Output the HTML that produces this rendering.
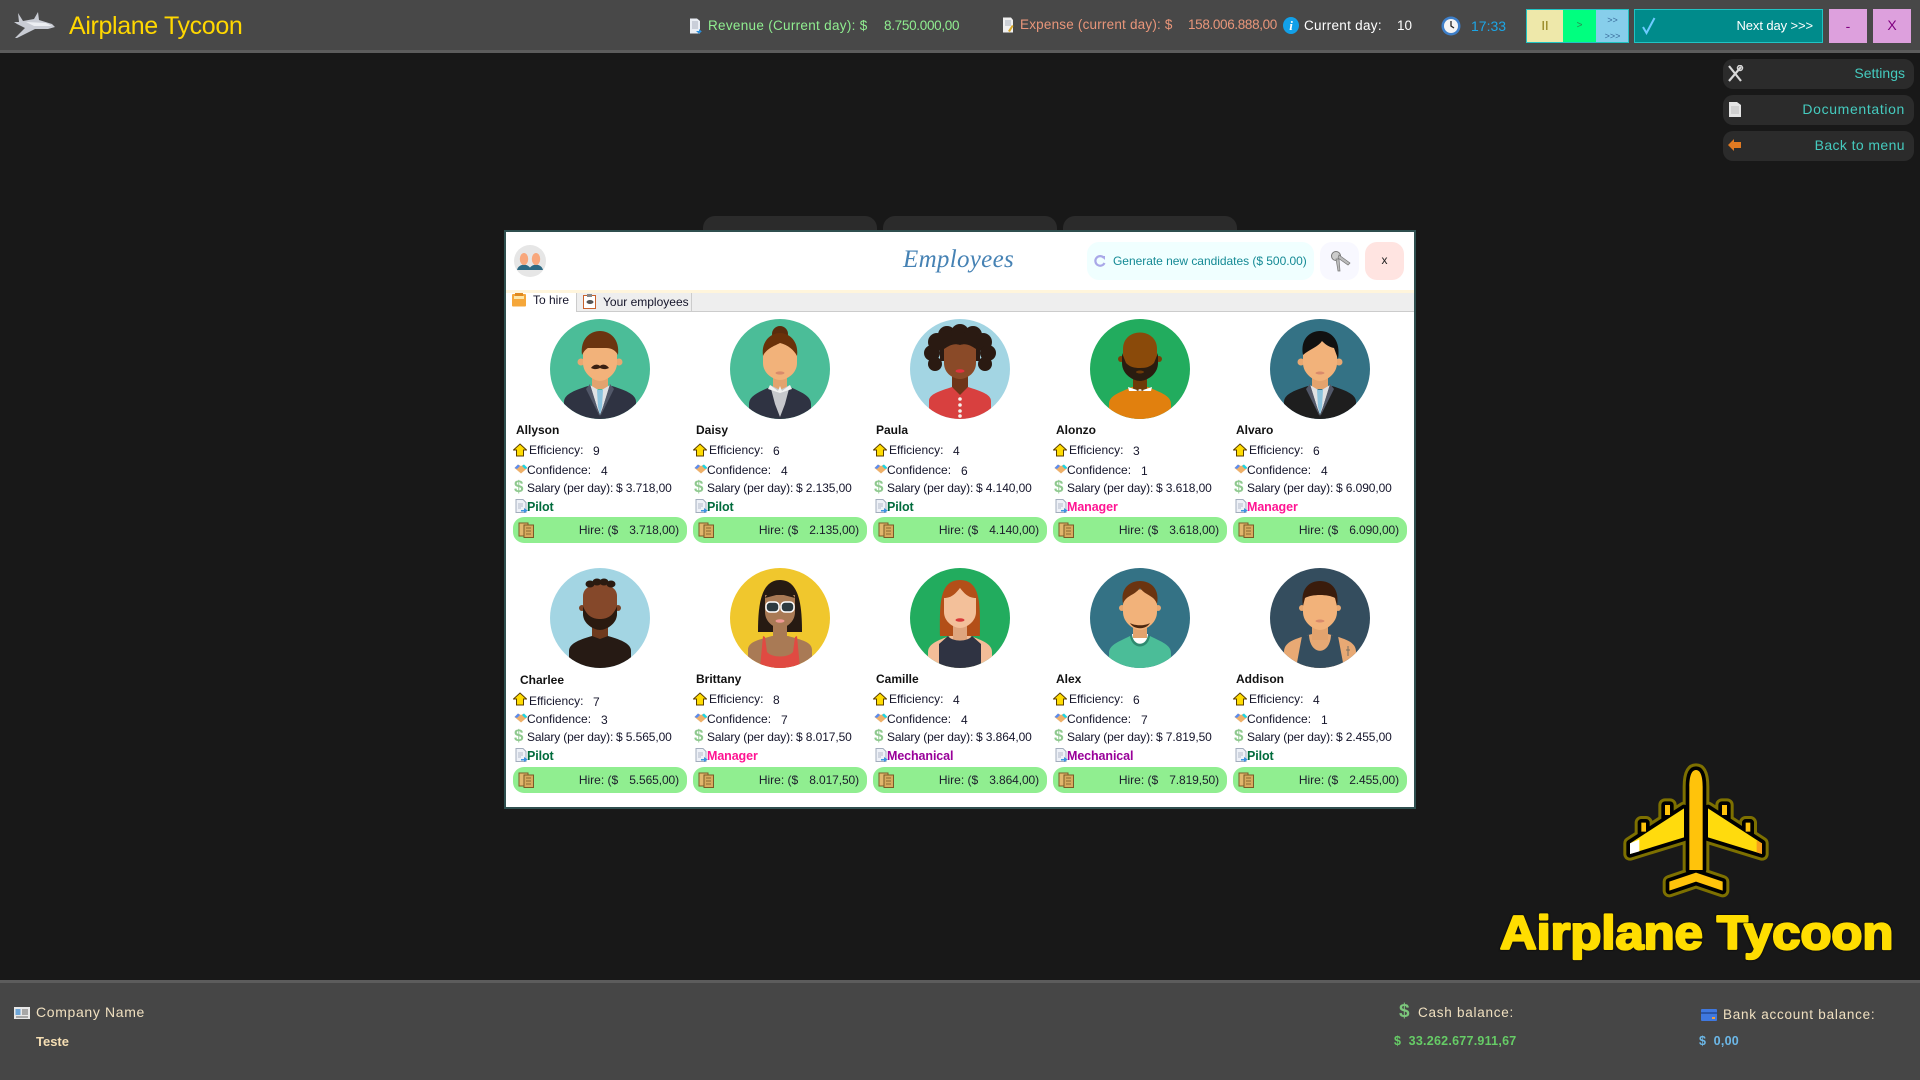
<!DOCTYPE html>
<html><head><meta charset="utf-8"><title>Airplane Tycoon</title>
<style>
html,body{margin:0;padding:0;width:1920px;height:1080px;overflow:hidden;background:#181818;font-family:"Liberation Sans",sans-serif;}
.a{position:absolute;white-space:nowrap;}
#top{position:absolute;left:0;top:0;width:1920px;height:50px;background:#484848;border-bottom:3px solid #5c5c5c;}
#bot{position:absolute;left:0;top:980px;width:1920px;height:97px;background:#464646;border-top:3px solid #5c5c5c;}
.t{font-size:13.5px;line-height:16px;top:18px;}
.sb{position:absolute;left:1723px;width:191px;height:30px;background:#2b2b2b;border-radius:10px;color:#45cbbf;font-size:14px;line-height:28px;text-align:right;box-sizing:border-box;padding-right:9px;letter-spacing:.4px;}
.tb{position:absolute;top:216px;width:174px;height:20px;background:#2b2b2b;border-radius:12px 12px 0 0;}
#m{position:absolute;left:504px;top:230px;width:908px;height:575px;background:#fff;border:2px solid #2f4f4f;}
.c{position:absolute;width:174px;height:130px;font-size:12px;line-height:16px;color:#14142a;}
.c .n{position:absolute;left:3px;top:2px;font-weight:bold;color:#111;white-space:nowrap;}
.c .l{position:absolute;white-space:nowrap;}
.c svg.i{position:absolute;}
.e{left:16px;top:22px}.ev{left:80px;top:23px}
.f{left:14px;top:42px}.fv{left:88px;top:43px}
.s{left:14px;top:60px;letter-spacing:-.15px}.sv{left:103px;top:60px;letter-spacing:-.1px}
.r{left:14px;top:79px;font-weight:bold;font-size:12.5px;letter-spacing:-.1px}
.pi{color:#006b3c}.ma{color:#ff1493}.me{color:#990099}
.d{position:absolute;left:1px;font-size:17px;font-weight:bold;color:#8fc98f;top:59px;}
.h{position:absolute;left:0;width:174px;height:26px;background:#90ee90;border-radius:11px;text-align:right;box-sizing:border-box;padding-right:8px;line-height:26px;font-size:12px;color:#1c1c2c;}
.h b{font-weight:normal;margin-left:11px;letter-spacing:-.1px;}
.av{position:absolute;left:37px;top:-101px;width:100px;height:100px;border-radius:50%;display:block;}
</style></head><body>
<svg width="0" height="0" style="position:absolute"><defs>
<symbol id="ue" viewBox="0 0 14 14"><path d="M7 1L13.500 7H10.500V13H3.500V7H.5Z" fill="#ffdc00" stroke="#5b3f00" stroke-width="1"/></symbol>
<symbol id="uc" viewBox="0 0 14 10"><path d="M7 9.500L.5 4 4 .5 7 2 10 .5 13.500 4Z" fill="#eeb069"/><path d="M.5 4L4 .5 6 2 3 5Z" fill="#5a8cf0"/><path d="M13.500 4L10 .5 8 2 11 5Z" fill="#1cd6e8"/></symbol>
<symbol id="ud" viewBox="0 0 13 14"><path d="M1 .5H8L11 3.500V13.500H1Z" fill="#eef1f7" stroke="#a3adbd"/><path d="M3 5H8M3 7H8M3 9H6" stroke="#b4bccb"/><path d="M6 11H9V9L12.800 11.500 9 14V12.500H6Z" fill="#3d93e0"/></symbol>
<symbol id="uh" viewBox="0 0 16 16"><rect x="1" y="1" width="9" height="13" fill="#e2b76e" stroke="#7c5a26"/><rect x="6" y="3" width="9.500" height="12.500" fill="#d8aa5e" stroke="#7c5a26"/><path d="M8 6H13M8 9H13M8 12H13" stroke="#8c6a30"/></symbol>
</defs></svg>

<div id="top"></div>
<svg class="a" style="left:12px;top:11px" width="44" height="28" viewBox="0 0 44 28"><path d="M6 2L11 10 22 8 26 1 27 9 40 13 43 16 36 18 23 18 5 27 3 27 13 17 5 13 2 11 7 11Z" fill="#c9ccd4"/><path d="M14 11L34 12 40 15 22 15Z" fill="#eceef2"/></svg>
<div class="a" style="left:69px;top:12px;font-size:25px;line-height:28px;color:#ffd700;letter-spacing:-.36px">Airplane Tycoon</div>

<svg class="a" style="left:689px;top:18px" width="13" height="16" viewBox="0 0 13 16"><path d="M1 .5H8L11 3V15.500H1Z" fill="#e9edf3"/><path d="M3 4H9M3 6H9M3 8H9M3 10H9" stroke="#a9b0bc"/><path d="M7 13H10V11L12.800 13.500 10 15.800Z" fill="#2a8fdc"/></svg>
<div class="a t" style="left:708px;color:#90ee90;letter-spacing:.3px">Revenue (Current day): $</div>
<div class="a t" style="left:884px;color:#90ee90;letter-spacing:-.3px">8.750.000,00</div>
<svg class="a" style="left:1002px;top:17px" width="13" height="16" viewBox="0 0 13 16"><path d="M1 .5H9L11 3V15.500H1Z" fill="#f0f0f0"/><path d="M3 4H9M3 6H9M3 8H9" stroke="#a9b0bc"/><path d="M6 14L10 8 11.500 9 8 15Z" fill="#d9a520"/></svg>
<div class="a t" style="left:1020px;color:#e9967a;letter-spacing:.2px;top:17px">Expense (current day): $</div>
<div class="a t" style="left:1188px;color:#e9967a;top:17px;letter-spacing:-.35px">158.006.888,00</div>
<div class="a" style="left:1283px;top:17px;width:16px;height:17px;border-radius:50%;background:#12a0e8;color:#fff;font:italic bold 13px/17px 'Liberation Serif',serif;text-align:center">i</div>
<div class="a t" style="left:1304px;color:#fff;letter-spacing:.3px">Current day:</div>
<div class="a t" style="left:1397px;color:#fff">10</div>
<svg class="a" style="left:1441px;top:16px" width="20" height="20" viewBox="0 0 20 20"><circle cx="10" cy="10" r="9.500" fill="#3e7fc9"/><circle cx="10" cy="10" r="7" fill="#f4f4f4"/><path d="M10 5V10L13 12" stroke="#222" stroke-width="1.300" fill="none"/></svg>
<div class="a t" style="left:1471px;color:#1ca6e6;font-size:14px">17:33</div>

<div class="a" style="left:1526px;top:9px;width:103px;height:34px;box-sizing:border-box;border:1px solid #20c4c4;background:#87ceeb"></div>
<div class="a" style="left:1527px;top:10px;width:36px;height:32px;background:#eee8aa;color:#8a7a10;font-size:13px;line-height:32px;text-align:center">II</div>
<div class="a" style="left:1563px;top:10px;width:33px;height:32px;background:#00ff7f;color:#2a8a50;font-size:10px;line-height:32px;text-align:center">&gt;</div>
<div class="a" style="left:1596px;top:12px;width:33px;color:#3a6a9a;font-size:9px;line-height:16px;text-align:center">&gt;&gt;<br>&gt;&gt;&gt;</div>
<div class="a" style="left:1634px;top:9px;width:189px;height:34px;box-sizing:border-box;border:1px solid #20c4c4;background:#008b8b;color:#fff;font-size:13px;line-height:31px;text-align:right;padding-right:9px;letter-spacing:-.1px">Next day &gt;&gt;&gt;</div>
<svg class="a" style="left:1642px;top:17px" width="14" height="18" viewBox="0 0 14 18"><path d="M1 10L4.500 16 12.500 1" stroke="#6ecbff" stroke-width="2" fill="none"/></svg>
<div class="a" style="left:1829px;top:9px;width:38px;height:34px;background:#dda0dd;color:#800080;font-size:14px;line-height:34px;text-align:center">-</div>
<div class="a" style="left:1873px;top:9px;width:38px;height:34px;background:#dda0dd;color:#800080;font-size:14px;line-height:32px;text-align:center">X</div>

<div class="sb" style="top:59px;letter-spacing:0">Settings</div>
<div class="sb" style="top:95px;letter-spacing:.65px">Documentation</div>
<div class="sb" style="top:131px">Back to menu</div>
<svg class="a" style="left:1726px;top:65px" width="18" height="18" viewBox="0 0 18 18"><path d="M3 1L15 16M15 2L3 16" stroke="#d8d8d8" stroke-width="2.200"/><circle cx="14" cy="3" r="2.500" fill="none" stroke="#d8d8d8" stroke-width="1.500"/></svg>
<svg class="a" style="left:1729px;top:102px" width="12" height="15" viewBox="0 0 12 15"><path d="M0 0H8L12 3V15H0Z" fill="#e4e4e4"/><path d="M2 5H10M2 7H10M2 9H10M2 11H10" stroke="#bbb"/></svg>
<svg class="a" style="left:1728px;top:139px" width="13" height="12" viewBox="0 0 13 12"><path d="M0 6L6 0V3H13V9H6V12Z" fill="#e07a22"/></svg>

<div class="tb" style="left:703px"></div>
<div class="tb" style="left:883px"></div>
<div class="tb" style="left:1063px"></div>

<div id="m"></div>
<div class="a" style="left:514px;top:245px;width:32px;height:32px;border-radius:50%;background:#e6e6e6"></div>
<svg class="a" style="left:516px;top:252px" width="28" height="20" viewBox="0 0 28 20"><path d="M1 18C2 14 5 13 8 12.500 11 13 14 14 15 18ZM13 18C14 14 17 13 20 12.500 23 13 26 14 27 18Z" fill="#2e6a84"/><ellipse cx="8" cy="7" rx="4.200" ry="6" fill="#f8a77c"/><ellipse cx="20" cy="7" rx="4.200" ry="6" fill="#f8a77c"/></svg>
<div class="a" style="left:903px;top:244px;font:italic 25px/32px 'Liberation Serif',serif;color:#4682b4;letter-spacing:.3px">Employees</div>
<div class="a" style="left:1087px;top:242px;width:227px;height:38px;border-radius:12px;background:#f0ffff"></div>
<svg class="a" style="left:1094px;top:255px" width="12" height="12" viewBox="0 0 12 12"><path d="M10 3A4.800 4.800 0 1 0 10.500 8" fill="none" stroke="#a9a8e8" stroke-width="2.200"/><path d="M7 1H11V5Z" fill="#a9a8e8"/></svg>
<div class="a" style="left:1113px;top:253px;font-size:12px;line-height:16px;color:#158a95;letter-spacing:-.03px">Generate new candidates ($ 500.00)</div>
<div class="a" style="left:1320px;top:242px;width:39px;height:38px;border-radius:12px;background:#f8f8ff"></div>
<svg class="a" style="left:1328px;top:250px" width="24" height="22" viewBox="0 0 24 22"><circle cx="8" cy="6" r="4.500" fill="#ccc" stroke="#777"/><path d="M8 9L10 21H12L11 9ZM11 5L22 13 20 15 10 8Z" fill="#bbb" stroke="#777" stroke-width=".7"/></svg>
<div class="a" style="left:1365px;top:242px;width:39px;height:38px;border-radius:12px;background:#ffe4e1;color:#222;font-size:12px;line-height:36px;text-align:center">x</div>

<div class="a" style="left:506px;top:290px;width:908px;height:3px;background:#fff5dc"></div>
<div class="a" style="left:506px;top:293px;width:908px;height:18px;background:#eeeeee;border-bottom:1px solid #ccc"></div>
<div class="a" style="left:506px;top:293px;width:70px;height:19px;background:#fff;border-right:1px solid #ccc"></div>
<div class="a" style="left:577px;top:293px;width:114px;height:18px;border-right:1px solid #ccc"></div>
<svg class="a" style="left:512px;top:293px" width="15" height="14" viewBox="0 0 15 14"><rect x="0" y="1" width="14" height="12.500" rx="1" fill="#f5a73a"/><rect x="3" y="0" width="8" height="3" fill="#e08a20"/><rect x="2" y="3" width="10" height="3" fill="#fde6a8"/></svg>
<div class="a" style="left:533px;top:292px;font-size:12px;line-height:16px;color:#14142a">To hire</div>
<svg class="a" style="left:583px;top:294px" width="13" height="15" viewBox="0 0 13 15"><rect x=".5" y="1.500" width="12" height="13" fill="#fff" stroke="#c8622c"/><rect x="4" y="0" width="5" height="3" fill="#888"/><ellipse cx="7" cy="8" rx="3.500" ry="2" fill="#555"/></svg>
<div class="a" style="left:603px;top:294px;font-size:12px;line-height:16px;color:#14142a">Your employees</div>

<!-- Row 1 -->
<div class="c" style="left:513px;top:420px">
<svg class="av" viewBox="0 0 100 100"><rect width="100" height="100" fill="#4bbd98"/><path d="M14 100V83C14 76 22 72 38 67L50 72 62 67C78 72 86 76 86 83V100Z" fill="#2f3342"/><rect x="42" y="52" width="16" height="18" fill="#e2a36e"/><path d="M40 66L50 72 60 66 53 88 50 96 47 88Z" fill="#dfe1e4"/><path d="M47 71H53L52 88 50 96 48 88Z" fill="#8cc3de"/><path d="M40 65L36 70 50 98ZM60 65L64 70 50 98Z" fill="#525869"/><circle cx="31" cy="43" r="3.500" fill="#e8a872"/><circle cx="69" cy="43" r="3.500" fill="#e8a872"/><path d="M33 36C33 14 67 14 67 36V44C67 55 56 62 50 62 44 62 33 55 33 44Z" fill="#f2b27a"/><path d="M32 36C30 20 40 12 50 12 60 12 70 20 68 36 66 32 62 29 56 29H38C36 30 34 32 32 36Z" fill="#6b3410"/><path d="M41 49C44 45 48 45 50 47 52 45 56 45 59 49 55 51 52 50 50 49 48 50 45 51 41 49Z" fill="#3a2012"/></svg>
<div class="n">Allyson</div>
<svg class="i" style="left:0;top:23px" width="14" height="14"><use href="#ue"/></svg><div class="l e">Efficiency:</div><div class="l ev">9</div>
<svg class="i" style="left:1px;top:44px" width="14" height="10"><use href="#uc"/></svg><div class="l f">Confidence:</div><div class="l fv">4</div>
<div class="d">$</div><div class="l s">Salary (per day):</div><div class="l sv">$ 3.718,00</div>
<svg class="i" style="left:2px;top:79px" width="13" height="14"><use href="#ud"/></svg><div class="l r pi">Pilot</div>
<div class="h" style="top:97px"><svg class="i" style="left:5px;top:5px" width="16" height="16"><use href="#uh"/></svg>Hire: ($<b>3.718,00)</b></div>
</div>

<div class="c" style="left:693px;top:420px">
<svg class="av" viewBox="0 0 100 100"><rect width="100" height="100" fill="#4bbd98"/><path d="M19 100V85C19 78 26 74 40 68L50 72 60 68C74 74 81 78 81 85V100Z" fill="#2f3342"/><rect x="43" y="52" width="14" height="18" fill="#e2a36e"/><path d="M40 66L50 71 60 66 55 85 50 98 45 85Z" fill="#c6c8cc"/><path d="M40 66L48 72 50 67 52 72 60 66 62 70 50 74 38 70Z" fill="#f2f2f2"/><circle cx="50" cy="15" r="8" fill="#5a2c0c"/><path d="M33 38C33 16 67 16 67 38V44C67 55 56 61 50 61 44 61 33 55 33 44Z" fill="#f2b27a"/><path d="M33 37C31 22 41 14 50 14 59 14 69 22 67 37 64 31 58 26 50 24 44 27 36 30 33 37Z" fill="#6a3109"/><ellipse cx="50" cy="54" rx="4.500" ry="1.600" fill="#d98a6b"/></svg>
<div class="n">Daisy</div>
<svg class="i" style="left:0;top:23px" width="14" height="14"><use href="#ue"/></svg><div class="l e">Efficiency:</div><div class="l ev">6</div>
<svg class="i" style="left:1px;top:44px" width="14" height="10"><use href="#uc"/></svg><div class="l f">Confidence:</div><div class="l fv">4</div>
<div class="d">$</div><div class="l s">Salary (per day):</div><div class="l sv">$ 2.135,00</div>
<svg class="i" style="left:2px;top:79px" width="13" height="14"><use href="#ud"/></svg><div class="l r pi">Pilot</div>
<div class="h" style="top:97px"><svg class="i" style="left:5px;top:5px" width="16" height="16"><use href="#uh"/></svg>Hire: ($<b>2.135,00)</b></div>
</div>

<div class="c" style="left:873px;top:420px">
<svg class="av" viewBox="0 0 100 100"><rect width="100" height="100" fill="#a3d5e3"/><g fill="#2a1a12"><circle cx="22" cy="34" r="8"/><circle cx="27" cy="23" r="9"/><circle cx="37" cy="16" r="9"/><circle cx="50" cy="14" r="9"/><circle cx="63" cy="16" r="9"/><circle cx="73" cy="23" r="9"/><circle cx="78" cy="34" r="8"/><circle cx="25" cy="45" r="7"/><circle cx="75" cy="45" r="7"/><rect x="30" y="18" width="40" height="24"/></g><path d="M19 100V82C19 75 30 72 42 68L50 74 58 68C70 72 81 75 81 82V100Z" fill="#d8403f"/><path d="M42 52H58V68L50 76 42 68Z" fill="#6e3519"/><path d="M34 30C40 26 44 24 50 26 56 24 60 26 66 30V44C66 55 56 60 50 60 44 60 34 55 34 44Z" fill="#8a4a28"/><ellipse cx="50" cy="52" rx="4.500" ry="1.800" fill="#e0333f"/><g fill="#f4f0ec"><circle cx="50" cy="80" r="1.800"/><circle cx="50" cy="86" r="1.800"/><circle cx="50" cy="92" r="1.800"/><circle cx="50" cy="97" r="1.800"/></g></svg>
<div class="n">Paula</div>
<svg class="i" style="left:0;top:23px" width="14" height="14"><use href="#ue"/></svg><div class="l e">Efficiency:</div><div class="l ev">4</div>
<svg class="i" style="left:1px;top:44px" width="14" height="10"><use href="#uc"/></svg><div class="l f">Confidence:</div><div class="l fv">6</div>
<div class="d">$</div><div class="l s">Salary (per day):</div><div class="l sv">$ 4.140,00</div>
<svg class="i" style="left:2px;top:79px" width="13" height="14"><use href="#ud"/></svg><div class="l r pi">Pilot</div>
<div class="h" style="top:97px"><svg class="i" style="left:5px;top:5px" width="16" height="16"><use href="#uh"/></svg>Hire: ($<b>4.140,00)</b></div>
</div>

<div class="c" style="left:1053px;top:420px">
<svg class="av" viewBox="0 0 100 100"><rect width="100" height="100" fill="#22ac5e"/><path d="M19 100V85C19 77 28 74 42 68H58C72 74 81 77 81 85V100Z" fill="#e1800e"/><rect x="43" y="52" width="14" height="20" fill="#6e3a08"/><path d="M38 68L50 72 62 68 61 72 54 72 50 70 46 72 39 72Z" fill="#fff"/><circle cx="31" cy="40" r="3" fill="#7a4008"/><circle cx="69" cy="40" r="3" fill="#7a4008"/><path d="M33 30C33 8 67 8 67 30V42C67 55 56 62 50 62 44 62 33 55 33 42Z" fill="#8a4a0a"/><path d="M32 34L36 44C40 48 44 49 50 49 56 49 60 48 64 44L68 34V44C68 56 56 62 50 62 44 62 32 56 32 44Z" fill="#2a1c10"/><ellipse cx="50" cy="53" rx="4" ry="1.500" fill="#6e3a08"/></svg>
<div class="n">Alonzo</div>
<svg class="i" style="left:0;top:23px" width="14" height="14"><use href="#ue"/></svg><div class="l e">Efficiency:</div><div class="l ev">3</div>
<svg class="i" style="left:1px;top:44px" width="14" height="10"><use href="#uc"/></svg><div class="l f">Confidence:</div><div class="l fv">1</div>
<div class="d">$</div><div class="l s">Salary (per day):</div><div class="l sv">$ 3.618,00</div>
<svg class="i" style="left:2px;top:79px" width="13" height="14"><use href="#ud"/></svg><div class="l r ma">Manager</div>
<div class="h" style="top:97px"><svg class="i" style="left:5px;top:5px" width="16" height="16"><use href="#uh"/></svg>Hire: ($<b>3.618,00)</b></div>
</div>

<div class="c" style="left:1233px;top:420px">
<svg class="av" viewBox="0 0 100 100"><rect width="100" height="100" fill="#347285"/><path d="M14 100V83C14 76 22 72 38 67L50 72 62 67C78 72 86 76 86 83V100Z" fill="#1e1e1e"/><rect x="42" y="52" width="16" height="18" fill="#e2a36e"/><path d="M40 66L50 72 60 66 53 88 50 96 47 88Z" fill="#dfe1e4"/><path d="M47 71H53L52 88 50 96 48 88Z" fill="#8cc3de"/><path d="M40 65L36 70 50 98ZM60 65L64 70 50 98Z" fill="#525869"/><circle cx="31" cy="43" r="3.500" fill="#e8a872"/><circle cx="69" cy="43" r="3.500" fill="#e8a872"/><path d="M33 36C33 14 67 14 67 36V44C67 55 56 62 50 62 44 62 33 55 33 44Z" fill="#f2b27a"/><path d="M33 36C30 20 40 12 50 12 62 12 71 22 68 40L64 29C58 28 54 24 52 22 48 28 40 30 33 36Z" fill="#111"/><ellipse cx="50" cy="54" rx="4.500" ry="1.500" fill="#d98a6b"/></svg>
<div class="n">Alvaro</div>
<svg class="i" style="left:0;top:23px" width="14" height="14"><use href="#ue"/></svg><div class="l e">Efficiency:</div><div class="l ev">6</div>
<svg class="i" style="left:1px;top:44px" width="14" height="10"><use href="#uc"/></svg><div class="l f">Confidence:</div><div class="l fv">4</div>
<div class="d">$</div><div class="l s">Salary (per day):</div><div class="l sv">$ 6.090,00</div>
<svg class="i" style="left:2px;top:79px" width="13" height="14"><use href="#ud"/></svg><div class="l r ma">Manager</div>
<div class="h" style="top:97px"><svg class="i" style="left:5px;top:5px" width="16" height="16"><use href="#uh"/></svg>Hire: ($<b>6.090,00)</b></div>
</div>

<!-- Row 2 -->
<div class="c" style="left:513px;top:669px">
<svg class="av" viewBox="0 0 100 100"><rect width="100" height="100" fill="#a3d5e3"/><path d="M19 100V83C19 76 28 72 42 68H58C72 72 81 76 81 83V100Z" fill="#261a14"/><path d="M42 52H58V68L50 71 42 68Z" fill="#6e3a1e"/><circle cx="32" cy="40" r="3" fill="#7a4326"/><circle cx="68" cy="40" r="3" fill="#7a4326"/><path d="M33 28C33 12 67 12 67 28V44C67 55 56 62 50 62 44 62 33 55 33 44Z" fill="#85482a"/><path d="M33 38C37 49 44 51 50 51 56 51 63 49 67 38V46C67 56 56 62 50 62 44 62 33 56 33 46Z" fill="#2a1a10"/><g fill="#2a1a10"><ellipse cx="40" cy="16" rx="4.500" ry="3.500"/><ellipse cx="47" cy="14" rx="4.500" ry="3.500"/><ellipse cx="54" cy="14" rx="4.500" ry="3.500"/><ellipse cx="61" cy="16" rx="4.500" ry="3.500"/></g></svg>
<div class="n" style="left:7px;top:3px">Charlee</div>
<svg class="i" style="left:0;top:23px" width="14" height="14"><use href="#ue"/></svg><div class="l e" style="top:24px">Efficiency:</div><div class="l ev" style="top:25px">7</div>
<svg class="i" style="left:1px;top:44px" width="14" height="10"><use href="#uc"/></svg><div class="l f">Confidence:</div><div class="l fv">3</div>
<div class="d">$</div><div class="l s">Salary (per day):</div><div class="l sv">$ 5.565,00</div>
<svg class="i" style="left:2px;top:79px" width="13" height="14"><use href="#ud"/></svg><div class="l r pi">Pilot</div>
<div class="h" style="top:98px"><svg class="i" style="left:5px;top:5px" width="16" height="16"><use href="#uh"/></svg>Hire: ($<b>5.565,00)</b></div>
</div>

<div class="c" style="left:693px;top:669px">
<svg class="av" viewBox="0 0 100 100"><rect width="100" height="100" fill="#f0c72d"/><path d="M28 64C28 40 30 12 50 12 70 12 72 40 72 64Z" fill="#261a12"/><path d="M18 100V82C18 74 28 72 42 68H58C72 72 82 74 82 82V100Z" fill="#a97a55"/><rect x="43" y="50" width="14" height="20" fill="#a97a55"/><path d="M35 27H65V44C65 54 56 60 50 60 44 60 35 54 35 44Z" fill="#a97a55"/><path d="M35 30C40 20 60 20 65 30L50 26Z" fill="#261a12"/><path d="M33 68L35 69 37 84C42 90 58 90 63 84L65 69 67 68 70 100H30Z" fill="#e04a42"/><rect x="36" y="34" width="13" height="10" rx="4" fill="#2c3a40" stroke="#fff" stroke-width="1.500"/><rect x="51" y="34" width="13" height="10" rx="4" fill="#2c3a40" stroke="#fff" stroke-width="1.500"/><ellipse cx="50" cy="53" rx="4.500" ry="1.700" fill="#f09a95"/></svg>
<div class="n">Brittany</div>
<svg class="i" style="left:0;top:23px" width="14" height="14"><use href="#ue"/></svg><div class="l e">Efficiency:</div><div class="l ev">8</div>
<svg class="i" style="left:1px;top:44px" width="14" height="10"><use href="#uc"/></svg><div class="l f">Confidence:</div><div class="l fv">7</div>
<div class="d">$</div><div class="l s">Salary (per day):</div><div class="l sv">$ 8.017,50</div>
<svg class="i" style="left:2px;top:79px" width="13" height="14"><use href="#ud"/></svg><div class="l r ma">Manager</div>
<div class="h" style="top:98px"><svg class="i" style="left:5px;top:5px" width="16" height="16"><use href="#uh"/></svg>Hire: ($<b>8.017,50)</b></div>
</div>

<div class="c" style="left:873px;top:669px">
<svg class="av" viewBox="0 0 100 100"><rect width="100" height="100" fill="#22ac5e"/><path d="M30 68C30 40 28 12 50 12 72 12 70 40 70 68Z" fill="#b34f18"/><path d="M18 100V84C18 76 28 72 40 68H60C72 72 82 76 82 84V100Z" fill="#f3bd98"/><rect x="43" y="48" width="14" height="24" fill="#dfa57e"/><path d="M29 100V76L38 68C42 74 58 74 62 68L71 76V100Z" fill="#2f3342"/><path d="M34 30C42 30 46 25 50 20 54 25 58 30 66 30V44C66 54 56 60 50 60 44 60 34 54 34 44Z" fill="#f3c09a"/><ellipse cx="50" cy="52" rx="4.500" ry="1.800" fill="#d83a3a"/></svg>
<div class="n">Camille</div>
<svg class="i" style="left:0;top:23px" width="14" height="14"><use href="#ue"/></svg><div class="l e">Efficiency:</div><div class="l ev">4</div>
<svg class="i" style="left:1px;top:44px" width="14" height="10"><use href="#uc"/></svg><div class="l f">Confidence:</div><div class="l fv">4</div>
<div class="d">$</div><div class="l s">Salary (per day):</div><div class="l sv">$ 3.864,00</div>
<svg class="i" style="left:2px;top:79px" width="13" height="14"><use href="#ud"/></svg><div class="l r me">Mechanical</div>
<div class="h" style="top:98px"><svg class="i" style="left:5px;top:5px" width="16" height="16"><use href="#uh"/></svg>Hire: ($<b>3.864,00)</b></div>
</div>

<div class="c" style="left:1053px;top:669px">
<svg class="av" viewBox="0 0 100 100"><rect width="100" height="100" fill="#347285"/><path d="M19 100V85C19 77 28 74 40 68H60C72 74 81 77 81 85V100Z" fill="#4bbd98"/><path d="M40 68C42 82 58 82 60 68Z" fill="#2e8a70"/><path d="M42 66C43 79 57 79 58 66Z" fill="#fff"/><rect x="43" y="52" width="14" height="18" fill="#e2a36e"/><circle cx="32" cy="40" r="3" fill="#e8a872"/><circle cx="68" cy="40" r="3" fill="#e8a872"/><path d="M33 32C33 18 67 18 67 32V44C67 55 56 62 50 62 44 62 33 55 33 44Z" fill="#f2b27a"/><path d="M33 36C30 20 40 13 50 13 60 13 70 20 67 36 64 27 56 28 50 20 44 28 36 27 33 36Z" fill="#6b3410"/><path d="M40 55C45 58 55 58 60 55 56 62 44 62 40 55Z" fill="#4d2810"/></svg>
<div class="n">Alex</div>
<svg class="i" style="left:0;top:23px" width="14" height="14"><use href="#ue"/></svg><div class="l e">Efficiency:</div><div class="l ev">6</div>
<svg class="i" style="left:1px;top:44px" width="14" height="10"><use href="#uc"/></svg><div class="l f">Confidence:</div><div class="l fv">7</div>
<div class="d">$</div><div class="l s">Salary (per day):</div><div class="l sv">$ 7.819,50</div>
<svg class="i" style="left:2px;top:79px" width="13" height="14"><use href="#ud"/></svg><div class="l r me">Mechanical</div>
<div class="h" style="top:98px"><svg class="i" style="left:5px;top:5px" width="16" height="16"><use href="#uh"/></svg>Hire: ($<b>7.819,50)</b></div>
</div>

<div class="c" style="left:1233px;top:669px">
<svg class="av" viewBox="0 0 100 100"><rect width="100" height="100" fill="#344d5e"/><path d="M14 100V84C14 74 24 71 42 66H58C76 71 86 74 86 84V100Z" fill="#e8a974"/><rect x="42" y="50" width="16" height="22" fill="#e2a36e"/><path d="M26 100L32 68 39 67C40 88 60 88 61 67L68 68 74 100Z" fill="#344d5e"/><circle cx="32" cy="40" r="3" fill="#e8a872"/><circle cx="68" cy="40" r="3" fill="#e8a872"/><path d="M33 32C33 18 67 18 67 32V44C67 55 56 62 50 62 44 62 33 55 33 44Z" fill="#f2b27a"/><path d="M33 38C30 20 40 13 50 13 60 13 70 20 67 38L65 30C58 26 42 26 35 30Z" fill="#3a1c0c"/><ellipse cx="50" cy="53" rx="4.500" ry="1.500" fill="#d98a6b"/><path d="M78 78V88M76 82H80" stroke="#7a7060" stroke-width="1"/></svg>
<div class="n">Addison</div>
<svg class="i" style="left:0;top:23px" width="14" height="14"><use href="#ue"/></svg><div class="l e">Efficiency:</div><div class="l ev">4</div>
<svg class="i" style="left:1px;top:44px" width="14" height="10"><use href="#uc"/></svg><div class="l f">Confidence:</div><div class="l fv">1</div>
<div class="d">$</div><div class="l s">Salary (per day):</div><div class="l sv">$ 2.455,00</div>
<svg class="i" style="left:2px;top:79px" width="13" height="14"><use href="#ud"/></svg><div class="l r pi">Pilot</div>
<div class="h" style="top:98px"><svg class="i" style="left:5px;top:5px" width="16" height="16"><use href="#uh"/></svg>Hire: ($<b>2.455,00)</b></div>
</div>

<!-- Logo -->
<svg class="a" style="left:1480px;top:750px" width="440" height="230" viewBox="0 0 1320 690">
<defs><path id="pl" d="M648 60C665 60 668 90 668 110V360H628V110C628 90 631 60 648 60ZM612 175V262L450 312V280ZM684 175V262L846 312V280ZM648 368L728 395V422L648 395 568 422V395ZM555 165H570V205H555ZM484 218H498V255H484ZM726 165H741V205H726ZM797 218H811V255H797Z"/></defs>
<use href="#pl" fill="#7d7000" stroke="#7d7000" stroke-width="40" stroke-linejoin="round"/>
<use href="#pl" fill="#000" stroke="#000" stroke-width="22" stroke-linejoin="round"/>
<path d="M555 165H570V195H555ZM484 218H498V245H484ZM726 165H741V195H726ZM797 218H811V245H797Z" fill="#ffc30b"/>
<path d="M612 175V262L450 312V280ZM684 175V262L846 312V280Z" fill="#ffdb0d"/>
<path d="M450 280L478 268V304L450 312Z" fill="#fff"/><path d="M846 280L830 272V307L846 312Z" fill="#f7a01c"/>
<path d="M648 60C665 60 668 90 668 110V360H628V110C628 90 631 60 648 60ZM648 368L728 395V422L648 395 568 422V395Z" fill="#ffc30b"/>
<text x="60" y="597" font-family="Liberation Sans, sans-serif" font-weight="bold" font-size="142" textLength="1180" lengthAdjust="spacingAndGlyphs" fill="#ffdd00" stroke="#ffdd00" stroke-width="7" stroke-linejoin="round" style="filter:drop-shadow(0 0 3px #000)">Airplane Tycoon</text>
</svg>

<!-- Footer -->
<div id="bot"></div>
<svg class="a" style="left:14px;top:1007px" width="16" height="12" viewBox="0 0 16 12"><rect width="16" height="12" fill="#e8e8e8"/><rect x="1.500" y="2" width="5" height="6" fill="#6ea6d8"/><path d="M8 3H14M8 5H14M8 7H14M2 10H14" stroke="#666"/></svg>
<div class="a" style="left:36px;top:1004px;font-size:14px;line-height:17px;color:#f0e0c0;letter-spacing:.65px">Company Name</div>
<div class="a" style="left:36px;top:1034px;font-size:13px;font-weight:bold;line-height:16px;color:#f5deb3">Teste</div>
<div class="a" style="left:1399px;top:1001px;font-size:19px;font-weight:bold;line-height:22px;color:#7cc87c">$</div>
<div class="a" style="left:1418px;top:1004px;font-size:13.500px;line-height:17px;color:#f0e0c0;letter-spacing:.75px">Cash balance:</div>
<div class="a" style="left:1394px;top:1033px;font-size:12.500px;font-weight:bold;line-height:16px;color:#66cc66;letter-spacing:.25px">$&nbsp; 33.262.677.911,67</div>
<svg class="a" style="left:1701px;top:1009px" width="16" height="12" viewBox="0 0 16 12"><rect width="16" height="12" rx="1" fill="#3f78e0"/><rect y="3" width="16" height="2" fill="#2a55a8"/><rect x="11" y="8" width="3" height="2" fill="#f0a040"/></svg>
<div class="a" style="left:1723px;top:1006px;font-size:13.500px;line-height:17px;color:#f0e0c0;letter-spacing:.75px">Bank account balance:</div>
<div class="a" style="left:1699px;top:1033px;font-size:12.500px;font-weight:bold;line-height:16px;color:#6cb8e8;letter-spacing:.25px">$&nbsp; 0,00</div>
</body></html>
